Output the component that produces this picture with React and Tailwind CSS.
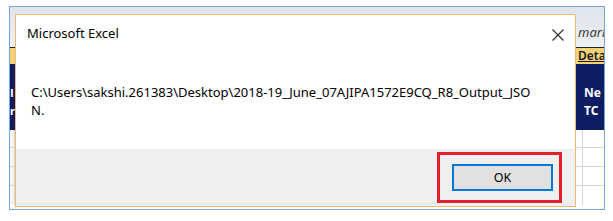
const font = { fontFamily: '"Noto Sans", "Open Sans", sans-serif' };

function GridRow({ last }) {
  return (
    <div className={`flex h-[19px] ${last ? '' : 'border-b border-[#d4d4d4]'}`}>
      <div className="w-[5px] border-r border-[#d4d4d4] bg-[#f3f3f3]" />
      <div className="flex-1" />
      <div className="w-[7px] border-r border-[#d4d4d4]" />
      <div className="w-[21px]" />
    </div>
  );
}

export default function App() {
  return (
    <div className="w-[613px] h-[221px] bg-white pl-[9px] pt-[6px]" style={font}>
      <div className="relative w-[596px] h-[204px] border border-[#79a6d9] bg-white overflow-hidden">
        {/* excel sheet behind the dialog */}
        <div className="flex flex-col h-full">
          <div className="h-[40px] flex bg-gradient-to-b from-[#dfe5ec] to-[#eef0f3]">
            <div className="flex-1" />
            <div className="w-[28px] pt-[19px] pl-[2px] text-[13px] italic text-[#3a3a3a] leading-none whitespace-nowrap overflow-hidden">mark</div>
          </div>
          <div className="h-[17px] flex bg-[#f3d37a] border-t border-[#222]">
            <div className="flex-1" />
            <div className="w-[28px] pl-[2px] text-[12px] font-semibold underline text-[#1a1a1a] leading-[16px] whitespace-nowrap overflow-hidden">Deta</div>
          </div>
          <div className="h-[66px] flex bg-[#0c1d62]">
            <div className="w-[5px] pt-[20px] text-[11px] font-bold text-white leading-[18px] overflow-hidden">
              <div className="-ml-[3px]">ll</div>
              <div>r</div>
            </div>
            <div className="flex-1" />
            <div className="w-[28px] pt-[20px] pl-[8px] text-[12px] font-bold text-white leading-[18px]">
              <div>Ne</div>
              <div>TC</div>
            </div>
          </div>
          <div className="flex h-[18px] border-b border-[#d4d4d4]">
            <div className="w-[5px] border-r border-[#d4d4d4] bg-[#f3f3f3]" />
            <div className="flex-1" />
            <div className="w-[7px] border-r border-[#d4d4d4]" />
            <div className="w-[21px]" />
          </div>
          <GridRow />
          <GridRow />
          <GridRow last />
        </div>

        {/* message box */}
        <div className="absolute left-[5px] top-[7px] w-[561px] h-[193px] border border-[#f0b775] bg-white flex flex-col">
          <div className="h-[38px] flex items-center justify-between pl-[11px] pr-[11px]">
            <span className="text-[13px] text-black">Microsoft Excel</span>
            <svg width="12" height="12" viewBox="0 0 12 12" className="mt-[1px]">
              <path d="M0.5 0.5 L11.5 11.5 M11.5 0.5 L0.5 11.5" stroke="#2b2b2b" strokeWidth="1.1" fill="none" />
            </svg>
          </div>
          <div className="flex-1 pl-[15px] pt-[30px] text-[13px] leading-[18px] text-black">
            C:\Users\sakshi.261383\Desktop\2018-19_June_07AJIPA1572E9CQ_R8_Output_JSO
            <br />
            N.
          </div>
          <div className="h-[57px] bg-[#f0f0f0] flex items-center justify-end pr-[22px]">
            <div className="relative">
              <button className="w-[101px] h-[27px] bg-[#e1e1e1] border-2 border-[#0078d7] text-[12.5px] text-black">
                OK
              </button>
              <div className="absolute -left-[15px] -top-[12px] w-[125px] h-[51px] border-[3px] border-[#e2202c]" />
            </div>
          </div>
        </div>
      </div>
    </div>
  );
}
